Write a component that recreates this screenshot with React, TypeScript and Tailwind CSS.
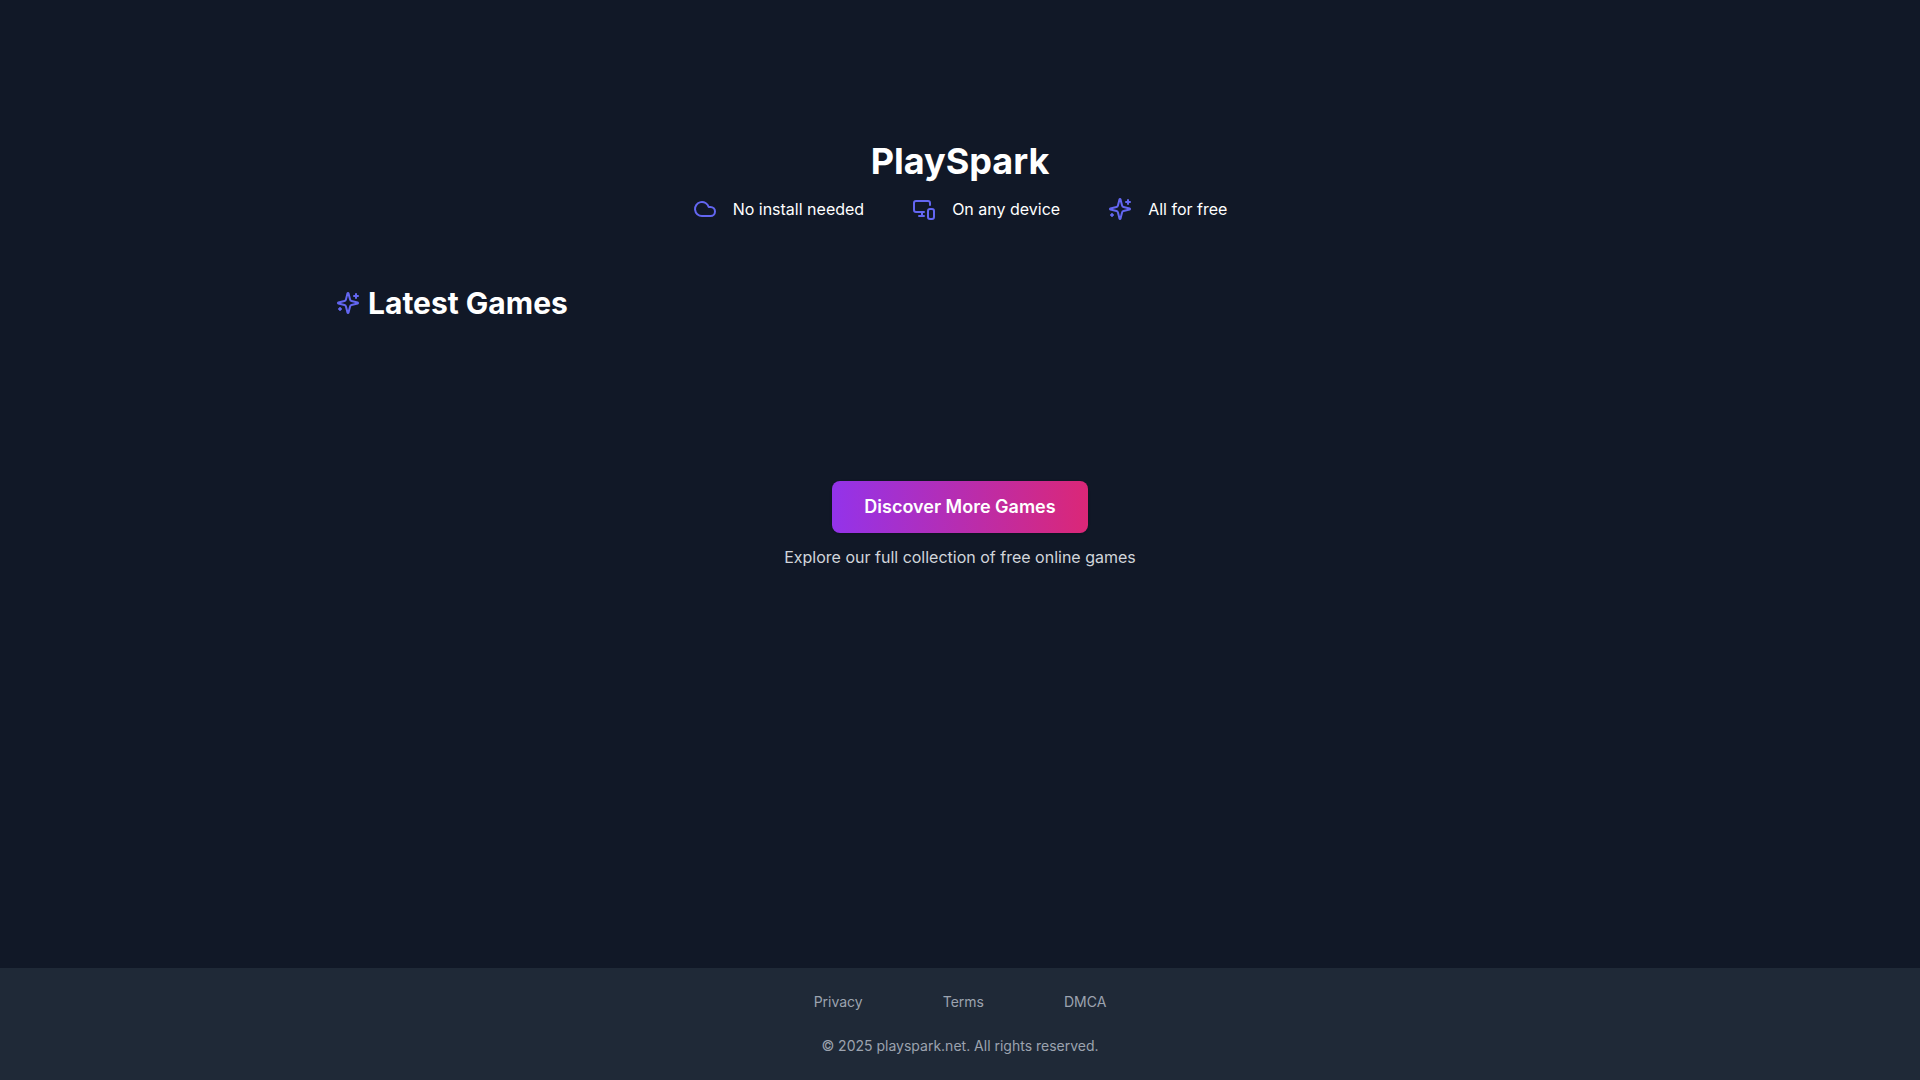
import { Cloud, MonitorSmartphone } from "lucide-react";

function SparklesIcon({ className }: { className?: string }) {
  return (
    <svg
      className={className}
      viewBox="0 0 24 24"
      fill="none"
      stroke="currentColor"
      strokeWidth="2"
      strokeLinecap="round"
      strokeLinejoin="round"
      aria-hidden="true"
    >
      <path d="M9.937 15.5A2 2 0 0 0 8.5 14.063l-6.135-1.582a.5.5 0 0 1 0-.962L8.5 9.936A2 2 0 0 0 9.937 8.5l1.582-6.135a.5.5 0 0 1 .963 0L14.063 8.5A2 2 0 0 0 15.5 9.937l6.135 1.581a.5.5 0 0 1 0 .964L15.5 14.063a2 2 0 0 0-1.437 1.437l-1.582 6.135a.5.5 0 0 1-.963 0z" />
      <path d="M20 3v4" />
      <path d="M22 5h-4" />
      <path d="M4 17v2" />
      <path d="M5 18H3" />
    </svg>
  );
}

const features = [
  { label: "No install needed", Icon: Cloud },
  { label: "On any device", Icon: MonitorSmartphone },
  { label: "All for free", Icon: SparklesIcon },
];

const footerLinks = [
  { label: "Privacy", href: "#privacy" },
  { label: "Terms", href: "#terms" },
  { label: "DMCA", href: "#dmca" },
];

export default function App() {
  return (
    <div className="flex min-h-screen flex-col bg-[#111827] font-['Inter',sans-serif] text-white">
      <main className="mx-auto w-full max-w-7xl grow px-4 pt-[141px]">
        {/* Hero */}
        <section className="text-center">
          <h1 className="mb-4 text-4xl font-bold">PlaySpark</h1>
          <ul className="flex flex-wrap items-center justify-center gap-12">
            {features.map(({ label, Icon }) => (
              <li key={label} className="flex items-center gap-4">
                <Icon className="size-6 text-[#6366f1]" />
                <span>{label}</span>
              </li>
            ))}
          </ul>
        </section>

        {/* Latest games */}
        <section className="mt-16">
          <h2 className="flex items-center gap-2 text-3xl font-bold">
            <SparklesIcon className="size-6 text-[#6366f1]" />
            Latest Games
          </h2>
        </section>

        {/* Call to action */}
        <section className="mt-40 text-center">
          <button
            type="button"
            className="rounded-lg bg-linear-to-r/srgb from-[#9333ea] to-[#db2777] px-8 py-3 text-lg font-semibold shadow-sm"
          >
            Discover More Games
          </button>
          <p className="mt-3 text-[#d1d5db]">Explore our full collection of free online games</p>
        </section>
      </main>

      {/* Footer */}
      <footer className="bg-[#1f2937] py-6 text-center text-sm text-[#9ca3af]">
        <nav className="mb-6 flex justify-center gap-20">
          {footerLinks.map((link) => (
            <a key={link.label} href={link.href}>
              {link.label}
            </a>
          ))}
        </nav>
        <p>© 2025 playspark.net. All rights reserved.</p>
      </footer>
    </div>
  );
}
